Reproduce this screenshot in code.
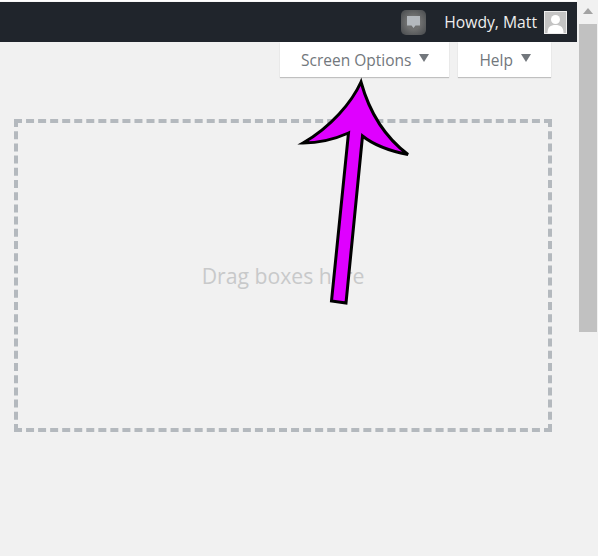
<div class="page">
  <div class="main">
    <header class="adminbar">
      <span class="bubble">
        <svg width="15" height="15" viewBox="0 0 15 15"><path d="M1 1h13v9.500H9.500L7.500 13 5.500 10.500H1z" fill="#b4b9be" /></svg>
      </span>
      <span class="howdy">Howdy, Matt</span>
      <span class="avatar">
        <svg width="21" height="21" viewBox="0 0 21 21">
          <rect width="21" height="21" fill="#c4c4c4" />
          <circle cx="10.500" cy="7.500" r="4.500" fill="#fff" />
          <path d="M2.500 21c0-6 3-8 8-8s8 2 8 8z" fill="#fff" />
        </svg>
      </span>
    </header>

    <div class="tabs">
      <button class="tab">Screen Options <i></i></button>
      <button class="tab">Help <i></i></button>
    </div>

    <div class="dropzone">Drag boxes here</div>
  </div>

  <aside class="scrollbar">
    <span class="up"></span>
    <div class="thumb"></div>
  </aside>

  <svg class="arrow" width="598" height="556" viewBox="0 0 598 556">
    <path
      d="M361 82 C352 102 331 127 303 143 C320 143 335 139 348.500 133 L331.500 301 L346 303 L362.500 136 C375 146 390 151 408 154.500 C390 141 371 118 361 82 Z"
      fill="#df00ff" stroke="#000" stroke-width="3" stroke-linejoin="miter" />
  </svg>
</div>

<style>
  :global(body) {
    margin: 0;
    background: #f1f1f1;
  }

  .page {
    position: relative;
    display: flex;
    width: 598px;
    height: 556px;
    overflow: hidden;
    font-family: "Open Sans", "Noto Sans", sans-serif;
  }

  .main {
    flex: 1;
    padding-top: 2px;
    box-shadow: inset 0 1.5px 0 #fff;
  }

  .adminbar {
    display: flex;
    align-items: center;
    justify-content: flex-end;
    height: 40px;
    padding-right: 10px;
    background: #20252c;
    color: #eee;
    font-size: 15.700px;
  }

  .bubble {
    display: flex;
    align-items: center;
    justify-content: center;
    width: 25px;
    height: 25px;
    margin-right: 18px;
    border-radius: 5px;
    background: radial-gradient(circle, #6f7070 40%, #45484b 100%);
  }

  .howdy {
    margin-right: 7px;
  }

  .avatar {
    display: flex;
    border: 1px solid #eee;
  }

  .tabs {
    display: flex;
    justify-content: flex-end;
    gap: 9px;
    padding-right: 26px;
  }

  .tab {
    display: flex;
    align-items: center;
    height: 35px;
    padding: 0 20px 0 21px;
    border: 0;
    background: #fff;
    box-shadow: 0 1px 1px rgba(0, 0, 0, 0.2);
    color: #72777c;
    font: 15.500px "Open Sans", "Noto Sans", sans-serif;
    white-space: pre;
  }

  .tab i {
    width: 0;
    height: 0;
    margin: -4px 0 0 4px;
    border-left: 5.500px solid transparent;
    border-right: 5.500px solid transparent;
    border-top: 8px solid #72777c;
  }

  .dropzone {
    display: flex;
    align-items: center;
    justify-content: center;
    box-sizing: border-box;
    width: 538px;
    height: 313px;
    margin: 42px 0 0 14px;
    border: 4px dashed #b4b9be;
    color: #c8c9ca;
    font-size: 21.200px;
  }

  .scrollbar {
    width: 21px;
    background: #f1f1f1;
    box-sizing: border-box;
    padding-top: 8px;
  }

  .up {
    display: block;
    width: 0;
    height: 0;
    margin: 0 auto;
    border-left: 5px solid transparent;
    border-right: 5px solid transparent;
    border-bottom: 6px solid #a3a3a3;
  }

  .thumb {
    width: 18px;
    height: 308px;
    margin: 10px 0 0 2px;
    background: #c1c1c1;
  }

  .arrow {
    position: absolute;
    top: 0;
    left: 0;
    pointer-events: none;
  }
</style>
